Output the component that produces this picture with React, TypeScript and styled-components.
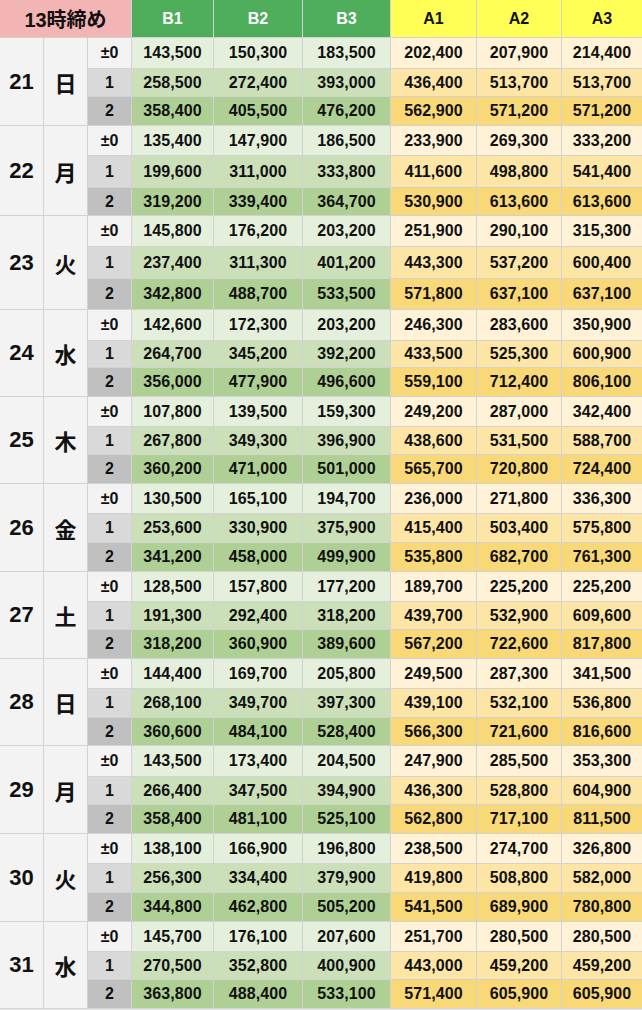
import React from "react";
import styled, { createGlobalStyle } from "styled-components";

const Global = createGlobalStyle`
  html, body { margin: 0; padding: 0; background: #e8e9eb; }
  body { font-family: "Liberation Sans", Arial, "Noto Sans CJK JP", sans-serif; }
`;

type Group = { day: string; wd: string; rows: string[][] };

const DATA: Group[] = [
  { day: "21", wd: "日", rows: [
    ["143,500","150,300","183,500","202,400","207,900","214,400"],
    ["258,500","272,400","393,000","436,400","513,700","513,700"],
    ["358,400","405,500","476,200","562,900","571,200","571,200"]] },
  { day: "22", wd: "月", rows: [
    ["135,400","147,900","186,500","233,900","269,300","333,200"],
    ["199,600","311,000","333,800","411,600","498,800","541,400"],
    ["319,200","339,400","364,700","530,900","613,600","613,600"]] },
  { day: "23", wd: "火", rows: [
    ["145,800","176,200","203,200","251,900","290,100","315,300"],
    ["237,400","311,300","401,200","443,300","537,200","600,400"],
    ["342,800","488,700","533,500","571,800","637,100","637,100"]] },
  { day: "24", wd: "水", rows: [
    ["142,600","172,300","203,200","246,300","283,600","350,900"],
    ["264,700","345,200","392,200","433,500","525,300","600,900"],
    ["356,000","477,900","496,600","559,100","712,400","806,100"]] },
  { day: "25", wd: "木", rows: [
    ["107,800","139,500","159,300","249,200","287,000","342,400"],
    ["267,800","349,300","396,900","438,600","531,500","588,700"],
    ["360,200","471,000","501,000","565,700","720,800","724,400"]] },
  { day: "26", wd: "金", rows: [
    ["130,500","165,100","194,700","236,000","271,800","336,300"],
    ["253,600","330,900","375,900","415,400","503,400","575,800"],
    ["341,200","458,000","499,900","535,800","682,700","761,300"]] },
  { day: "27", wd: "土", rows: [
    ["128,500","157,800","177,200","189,700","225,200","225,200"],
    ["191,300","292,400","318,200","439,700","532,900","609,600"],
    ["318,200","360,900","389,600","567,200","722,600","817,800"]] },
  { day: "28", wd: "日", rows: [
    ["144,400","169,700","205,800","249,500","287,300","341,500"],
    ["268,100","349,700","397,300","439,100","532,100","536,800"],
    ["360,600","484,100","528,400","566,300","721,600","816,600"]] },
  { day: "29", wd: "月", rows: [
    ["143,500","173,400","204,500","247,900","285,500","353,300"],
    ["266,400","347,500","394,900","436,300","528,800","604,900"],
    ["358,400","481,100","525,100","562,800","717,100","811,500"]] },
  { day: "30", wd: "火", rows: [
    ["138,100","166,900","196,800","238,500","274,700","326,800"],
    ["256,300","334,400","379,900","419,800","508,800","582,000"],
    ["344,800","462,800","505,200","541,500","689,900","780,800"]] },
  { day: "31", wd: "水", rows: [
    ["145,700","176,100","207,600","251,700","280,500","280,500"],
    ["270,500","352,800","400,900","443,000","459,200","459,200"],
    ["363,800","488,400","533,100","571,400","605,900","605,900"]] },
];

const ROW_HEIGHTS = [
  30, 27, 28, 29, 31, 27, 30, 31, 30, 30, 26, 28, 29, 27, 28, 29, 28, 28,
  29, 27, 28, 29, 28, 27, 30, 27, 28, 29, 28, 28, 29, 27, 28,
];

const LABELS = ["±0", "1", "2"];
const LABEL_BG = ["#f3f3f3", "#d9d9d9", "#c0c0c0"];
const B_BG = ["#e5f0dc", "#cbdfb9", "#afd095"];
const A_BG = ["#fff2d6", "#fde5a6", "#f9d878"];

const Sheet = styled.div<{ $rows: string }>`
  display: grid;
  width: 642px;
  grid-template-columns: 43px 43px 43px 81px 88px 87px 85px 84px 80px;
  grid-template-rows: ${(p) => p.$rows};
  column-gap: 1px;
  row-gap: 1px;
  padding-bottom: 1px;
  background: #d2d2d2;
  overflow: hidden;
`;

const Cell = styled.div`
  display: flex;
  align-items: center;
  justify-content: center;
  font-weight: 700;
  color: #111;
  white-space: nowrap;
`;

const TitleCell = styled(Cell)`
  grid-column: span 3;
  background: #f3b4b4;
  font-size: 20px;
  font-family: "Liberation Sans", "Noto Sans CJK JP", sans-serif;
`;

const HeadCell = styled(Cell)<{ $kind: "B" | "A" }>`
  font-size: 16px;
  background: ${(p) => (p.$kind === "B" ? "#4eae5c" : "#ffff55")};
  color: ${(p) => (p.$kind === "B" ? "#ffffff" : "#111")};
`;

const DayCell = styled(Cell)`
  grid-row: span 3;
  background: #f3f3f3;
  font-size: 22px;
  font-family: "Liberation Sans", "Noto Sans CJK JP", sans-serif;
`;

const LabelCell = styled(Cell)<{ $idx: number }>`
  background: ${(p) => LABEL_BG[p.$idx]};
  font-size: 16px;
`;

const ValueCell = styled(Cell)<{ $kind: "B" | "A"; $idx: number }>`
  background: ${(p) => (p.$kind === "B" ? B_BG[p.$idx] : A_BG[p.$idx])};
  font-size: 16px;
  letter-spacing: 0.1px;
`;

const HEADERS: { label: string; kind: "B" | "A" }[] = [
  { label: "B1", kind: "B" },
  { label: "B2", kind: "B" },
  { label: "B3", kind: "B" },
  { label: "A1", kind: "A" },
  { label: "A2", kind: "A" },
  { label: "A3", kind: "A" },
];

export default function App() {
  const rows = ["37px", ...ROW_HEIGHTS.map((h) => `${h}px`)].join(" ");
  return (
    <>
      <Global />
      <Sheet $rows={rows}>
        <TitleCell>13時締め</TitleCell>
        {HEADERS.map((h) => (
          <HeadCell key={h.label} $kind={h.kind}>
            {h.label}
          </HeadCell>
        ))}
        {DATA.map((g) => (
          <React.Fragment key={g.day}>
            {g.rows.map((r, i) => (
              <React.Fragment key={i}>
                {i === 0 && (
                  <>
                    <DayCell>{g.day}</DayCell>
                    <DayCell>{g.wd}</DayCell>
                  </>
                )}
                <LabelCell $idx={i}>{LABELS[i]}</LabelCell>
                {r.map((v, j) => (
                  <ValueCell key={j} $kind={j < 3 ? "B" : "A"} $idx={i}>
                    {v}
                  </ValueCell>
                ))}
              </React.Fragment>
            ))}
          </React.Fragment>
        ))}
      </Sheet>
    </>
  );
}
